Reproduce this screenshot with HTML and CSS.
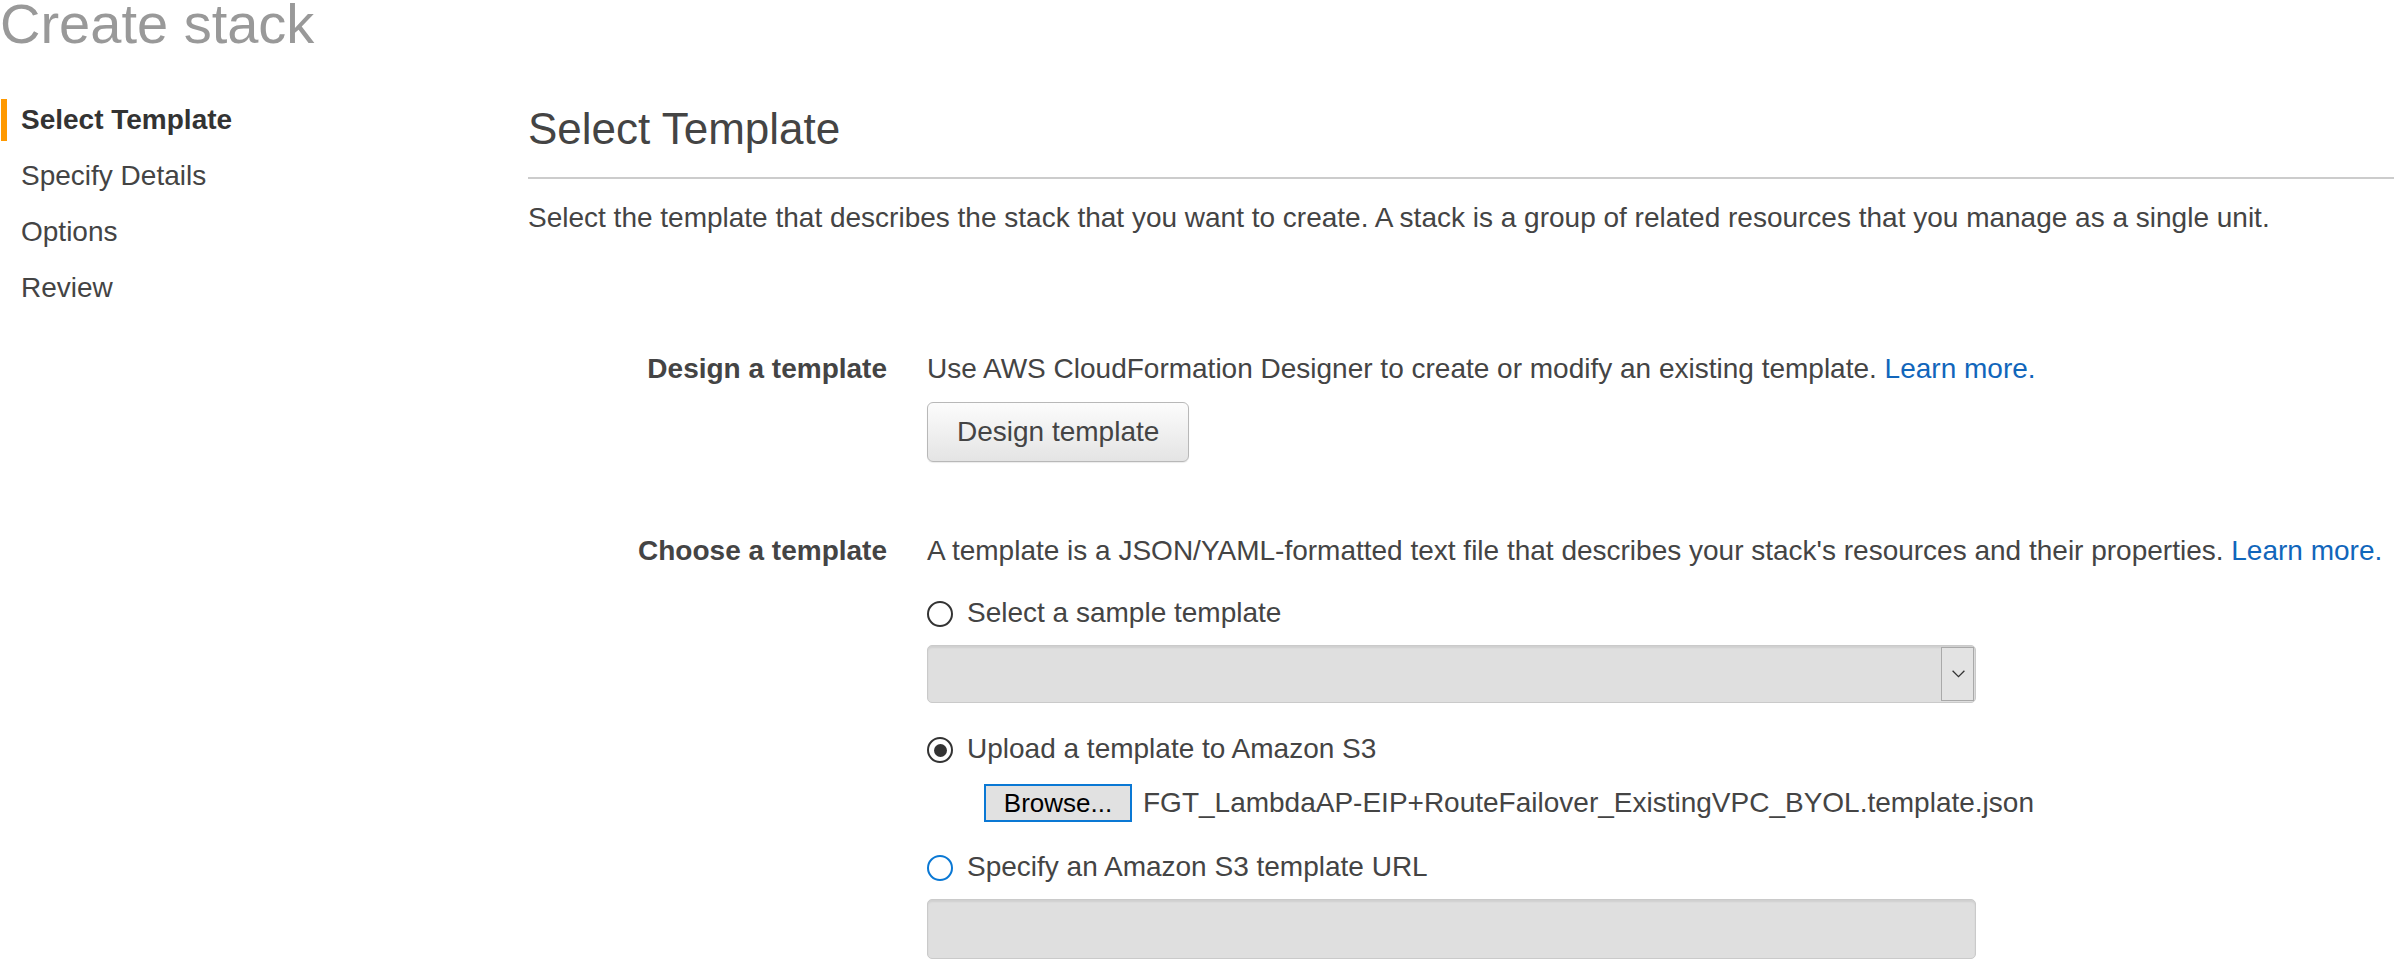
FILE: index.html
```html
<!DOCTYPE html>
<html lang="en">
<head>
<meta charset="utf-8">
<title>Create stack</title>
<link rel="stylesheet" href="styles.css">
</head>
<body>
<h1 class="page-title">Create stack</h1>
<div class="layout">
  <nav class="steps">
    <div class="step active">Select Template</div>
    <div class="step">Specify Details</div>
    <div class="step">Options</div>
    <div class="step">Review</div>
  </nav>
  <main class="content">
    <h2 class="section-title">Select Template</h2>
    <p class="intro">Select the template that describes the stack that you want to create. A stack is a group of related resources that you manage as a single unit.</p>
    <div class="form">
      <div class="row">
        <div class="label">Design a template</div>
        <div class="field">
          <div class="line">Use AWS CloudFormation Designer to create or modify an existing template. <a class="link" href="#">Learn more.</a></div>
          <button class="btn" type="button">Design template</button>
        </div>
      </div>
      <div class="row row-choose">
        <div class="label">Choose a template</div>
        <div class="field">
          <div class="line">A template is a JSON/YAML-formatted text file that describes your stack's resources and their properties. <a class="link" href="#">Learn more.</a></div>
          <div class="option option-first"><span class="radio"></span><span>Select a sample template</span></div>
          <div class="select"><span class="select-arrow"><svg width="13" height="8" viewBox="0 0 13 8"><polyline points="0.6,0.8 6.5,6.6 12.4,0.8" fill="none" stroke="#333" stroke-width="1.3"/></svg></span></div>
          <div class="option option-upload"><span class="radio checked"></span><span>Upload a template to Amazon S3</span></div>
          <div class="file-row"><span class="browse">Browse...</span><span class="file-name">FGT_LambdaAP-EIP+RouteFailover_ExistingVPC_BYOL.template.json</span></div>
          <div class="option option-url"><span class="radio focus"></span><span>Specify an Amazon S3 template URL</span></div>
          <div class="url-input"></div>
        </div>
      </div>
    </div>
  </main>
</div>
</body>
</html>
```
FILE: styles.css
```css
html, body {
  margin: 0;
  padding: 0;
  overflow: hidden;
  background: #fff;
}
body {
  font-family: "Liberation Sans", Arial, sans-serif;
  color: #444;
  font-size: 28px;
  width: 2394px;
  height: 965px;
}
.page-title {
  margin: 0;
  font-size: 56px;
  font-weight: normal;
  line-height: 48px;
  height: 48px;
  color: #999;
  white-space: nowrap;
}
.layout {
  display: flex;
}
.steps {
  width: 527px;
  flex: none;
  padding: 51px 0 0 1px;
}
.step {
  height: 42px;
  line-height: 42px;
  margin-bottom: 14px;
  border-left: 6px solid transparent;
  padding-left: 14px;
  white-space: nowrap;
  color: #444;
}
.step.active {
  border-left-color: #f90;
  font-weight: bold;
  color: #333;
}
.content {
  flex: 1;
  min-width: 0;
}
.section-title {
  margin: 55px 0 0;
  font-size: 44px;
  font-weight: normal;
  line-height: 52px;
  padding-bottom: 22px;
  border-bottom: 2px solid #ccc;
  color: #444;
  white-space: nowrap;
}
.intro {
  margin: 18px 0 0;
  line-height: 42px;
  white-space: nowrap;
}
.form {
  margin-top: 109px;
}
.row {
  display: flex;
}
.row-choose {
  margin-top: 68px;
}
.label {
  width: 359px;
  flex: none;
  text-align: right;
  font-weight: bold;
  line-height: 42px;
  white-space: nowrap;
  color: #444;
}
.field {
  margin-left: 40px;
  display: flex;
  flex-direction: column;
  align-items: flex-start;
}
.line {
  line-height: 42px;
  white-space: nowrap;
}
.link {
  color: #1166bb;
  text-decoration: none;
}
.btn {
  margin-top: 12px;
  height: 60px;
  box-sizing: border-box;
  padding: 0 29px;
  line-height: 58px;
  font-family: "Liberation Sans", Arial, sans-serif;
  font-size: 28px;
  color: #444;
  border: 1px solid #b8b8b8;
  border-radius: 6px;
  background: linear-gradient(#fcfcfc, #e4e4e4);
  box-shadow: 0 1px 1px rgba(0,0,0,0.08);
  white-space: nowrap;
}
.option {
  display: flex;
  align-items: center;
  gap: 14px;
  height: 42px;
  line-height: 42px;
  white-space: nowrap;
}
.option-first {
  margin-top: 20px;
}
.option-upload {
  margin-top: 25px;
}
.option-url {
  margin-top: 24px;
}
.radio {
  width: 26px;
  height: 26px;
  box-sizing: border-box;
  border: 2px solid #333;
  border-radius: 50%;
  background: #fff;
  margin-top: 2px;
  display: flex;
  align-items: center;
  justify-content: center;
  flex: none;
}
.radio.checked::after {
  content: "";
  width: 13px;
  height: 13px;
  border-radius: 50%;
  background: #333;
}
.radio.focus {
  border-color: #0a78d4;
}
.select {
  margin-top: 11px;
  width: 1049px;
  height: 58px;
  box-sizing: border-box;
  border: 1px solid #cacaca;
  border-radius: 5px;
  background: #dfdfdf;
  box-shadow: inset 0 2px 2px rgba(0,0,0,0.07);
  display: flex;
  justify-content: flex-end;
  padding: 1px;
}
.select-arrow {
  width: 33px;
  box-sizing: border-box;
  border: 1px solid #a9a9a9;
  background: #e3e3e3;
  display: flex;
  align-items: center;
  justify-content: center;
}
.select-arrow svg {
  display: block;
  margin-left: 2px;
}
.file-row {
  margin-top: 14px;
  margin-left: 57px;
  display: flex;
  align-items: center;
  gap: 11px;
  height: 38px;
}
.browse {
  width: 148px;
  height: 38px;
  box-sizing: border-box;
  border: 2px solid #0a78d4;
  background: #e1e1e1;
  color: #000;
  font-size: 26px;
  line-height: 34px;
  text-align: center;
  flex: none;
}
.file-name {
  line-height: 38px;
  white-space: nowrap;
  color: #444;
}
.url-input {
  margin-top: 11px;
  width: 1049px;
  height: 60px;
  box-sizing: border-box;
  border: 1px solid #cacaca;
  border-radius: 5px;
  background: #dfdfdf;
  box-shadow: inset 0 2px 2px rgba(0,0,0,0.07);
}
```
